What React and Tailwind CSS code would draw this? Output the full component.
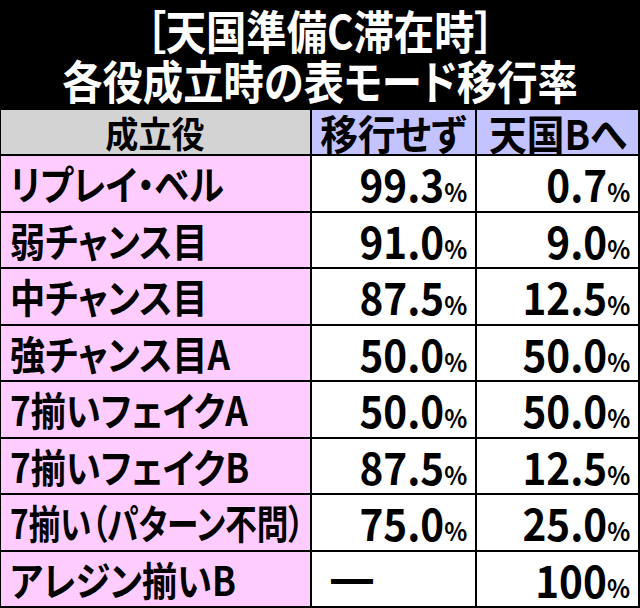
import React from "react";

const rows = [
  ["リプレイ・ベル", "99.3", "0.7", "scale-x-[0.88]"],
  ["弱チャンス目", "91.0", "9.0", "scale-x-[0.88]"],
  ["中チャンス目", "87.5", "12.5", "scale-x-[0.88]"],
  ["強チャンス目A", "50.0", "50.0", "scale-x-[0.88]"],
  ["7揃いフェイクA", "50.0", "50.0", "scale-x-[0.88]"],
  ["7揃いフェイクB", "87.5", "12.5", "scale-x-[0.88]"],
  ["7揃い（パターン不問）", "75.0", "25.0", "scale-x-[0.79]"],
  ["アレジン揃いB", null, "100", "scale-x-[0.88]"],
];

const F = "font-['Noto_Sans_CJK_JP','Noto_Sans',sans-serif] font-bold [font-feature-settings:'palt']";

function Num({ v }) {
  return (
    <div className="flex items-center justify-end bg-white pr-[8px]">
      <span className="inline-block origin-right scale-x-[0.92] whitespace-nowrap leading-none">
        <span className="text-[44px]">{v}</span>
        <span className="text-[26px]">%</span>
      </span>
    </div>
  );
}

export default function App() {
  return (
    <div className={`w-[640px] h-[608px] bg-black ${F}`}>
      <div className="h-[108px] pt-[4px] flex flex-col items-center text-white text-[46px] leading-[50px]">
        <span className="inline-block scale-x-[0.877] whitespace-nowrap">［天国準備C滞在時］</span>
        <span className="inline-block scale-x-[0.877] whitespace-nowrap">各役成立時の表モード移行率</span>
      </div>
      <div className="h-[500px] px-[1px] py-[2px] grid grid-cols-[309px_163px_161px] grid-rows-[44px_repeat(8,minmax(0,1fr))] gap-[2px] text-black">
        <div className="flex items-center justify-center bg-[#d3d3d3]">
          <span className="inline-block scale-x-[0.92] text-[36px] leading-none whitespace-nowrap">成立役</span>
        </div>
        <div className="flex items-center justify-center bg-[#c3c3ff]">
          <span className="inline-block scale-x-[0.92] text-[41px] leading-none whitespace-nowrap">移行せず</span>
        </div>
        <div className="flex items-center justify-center bg-[#c3c3ff]">
          <span className="inline-block scale-x-[0.92] text-[41px] leading-none whitespace-nowrap">天国Bへ</span>
        </div>
        {rows.map(([label, a, b, sc]) => (
          <React.Fragment key={label}>
            <div className="flex items-center bg-[#ffccff] pl-[9px]">
              <span className={`inline-block origin-left ${sc} text-[40px] leading-none whitespace-nowrap`}>{label}</span>
            </div>
            {a === null ? (
              <div className="flex items-center justify-end bg-white pr-[102px]">
                <span className="inline-block text-[42px] leading-normal">━</span>
              </div>
            ) : (
              <Num v={a} />
            )}
            <Num v={b} />
          </React.Fragment>
        ))}
      </div>
    </div>
  );
}
